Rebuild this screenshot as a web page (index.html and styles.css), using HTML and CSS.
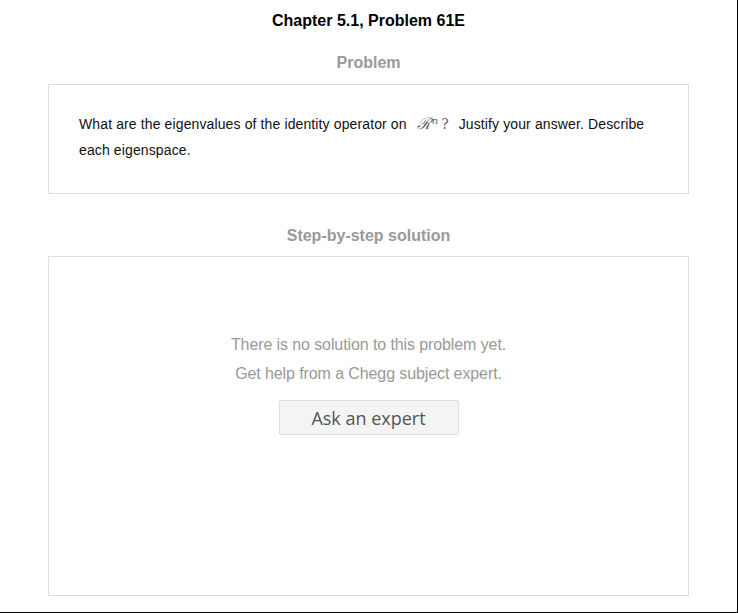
FILE: index.html
```html
<!DOCTYPE html>
<html lang="en">
<head>
<meta charset="utf-8">
<title>Chapter 5.1, Problem 61E</title>
<link rel="stylesheet" href="styles.css">
</head>
<body>
<div class="page">
  <h1 class="title">Chapter 5.1, Problem 61E</h1>
  <h2 class="section-head">Problem</h2>
  <div class="card problem-card">
    <p class="problem-text">What are the eigenvalues of the identity operator on <span class="math"><span class="math-r">ℛ</span><sup class="math-n">n</sup><span class="math-q">?</span></span> Justify your answer. Describe each eigenspace.</p>
  </div>
  <h2 class="section-head solution-head">Step-by-step solution</h2>
  <div class="card solution-card">
    <p class="empty-line">There is no solution to this problem yet.</p>
    <p class="empty-line">Get help from a Chegg subject expert.</p>
    <button class="ask-btn" type="button">Ask an expert</button>
  </div>
</div>
</body>
</html>
```
FILE: styles.css
```css
html, body {
  margin: 0;
  padding: 0;
  background: #fff;
}
body {
  font-family: "Liberation Sans", Arial, sans-serif;
  color: #000;
}
.page {
  box-sizing: border-box;
  width: 738px;
  height: 613px;
  border-right: 1px solid #000;
  border-bottom: 1px solid #000;
  padding: 11px 48px 0 48px;
  display: flex;
  flex-direction: column;
  align-items: stretch;
}
.title {
  margin: 0;
  font-size: 16px;
  line-height: 20px;
  font-weight: bold;
  text-align: center;
  color: #000;
}
.section-head {
  margin: 22px 0 0 0;
  font-size: 16px;
  line-height: 20px;
  font-weight: bold;
  text-align: center;
  color: #999;
}
.card {
  border: 1px solid #ddd;
  background: #fff;
}
.problem-card {
  margin-top: 11px;
  height: 110px;
  box-sizing: border-box;
  padding: 26px 30px 0 30px;
}
.problem-text {
  margin: 0;
  font-size: 14px;
  letter-spacing: 0.12px;
  line-height: 26px;
  color: #111;
}
.math {
  font-family: "DejaVu Serif", serif;
  color: #666;
  margin-left: 6px;
  margin-right: 6px;
  letter-spacing: 0;
}
.math-r {
  font-size: 16px;
  font-style: italic;
}
.math-n {
  font-size: 10px;
  font-style: italic;
  vertical-align: 5px;
  line-height: 0;
  margin-left: 1px;
}
.math-q {
  font-size: 14px;
  margin-left: 3px;
}
.solution-head {
  margin-top: 32px;
}
.solution-card {
  margin-top: 10px;
  height: 340px;
  box-sizing: border-box;
  padding-top: 73px;
  display: flex;
  flex-direction: column;
  align-items: center;
}
.empty-line {
  margin: 0;
  font-size: 16px;
  letter-spacing: -0.1px;
  line-height: 29px;
  color: #999;
}
.ask-btn {
  margin-top: 12px;
  width: 180px;
  height: 35px;
  box-sizing: border-box;
  border: 1px solid #ddd;
  border-radius: 2px;
  background: #f4f4f4;
  color: #555;
  font-family: "Open Sans", "Noto Sans", sans-serif;
  font-size: 18px;
  padding: 0;
}
```
